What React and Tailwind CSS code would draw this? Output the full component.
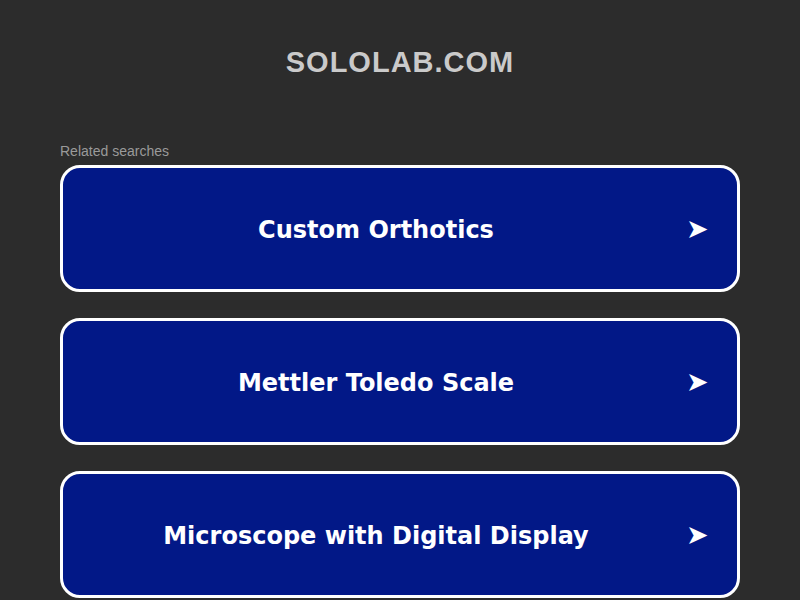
import React from 'react';

const searches = ['Custom Orthotics', 'Mettler Toledo Scale', 'Microscope with Digital Display'];

export default function App() {
  return (
    <div className="min-h-[600px] bg-[#2c2c2c] font-['Liberation_Sans',Arial,sans-serif]">
      <div className="pt-[44px] text-center text-[29px] leading-[36px] font-bold tracking-[1px] text-[#cacaca]">
        SOLOLAB.COM
      </div>
      <div className="px-[60px] pt-[63px]">
        <div className="text-[14px] leading-[16px] text-[#9a9a9a]">Related searches</div>
        <div className="mt-[6px] flex flex-col gap-[26px]">
          {searches.map((s) => (
            <a
              key={s}
              href="#"
              className="flex h-[127px] items-center rounded-[20px] border-[3px] border-white bg-[#021887] pl-[3px] pt-[2px] text-white"
            >
              <span className="flex-1 text-center font-['DejaVu_Sans',Verdana,sans-serif] text-[24px] font-bold">{s}</span>
              <span className="w-[51px] text-left text-[27px] leading-none">➤</span>
            </a>
          ))}
        </div>
      </div>
    </div>
  );
}
